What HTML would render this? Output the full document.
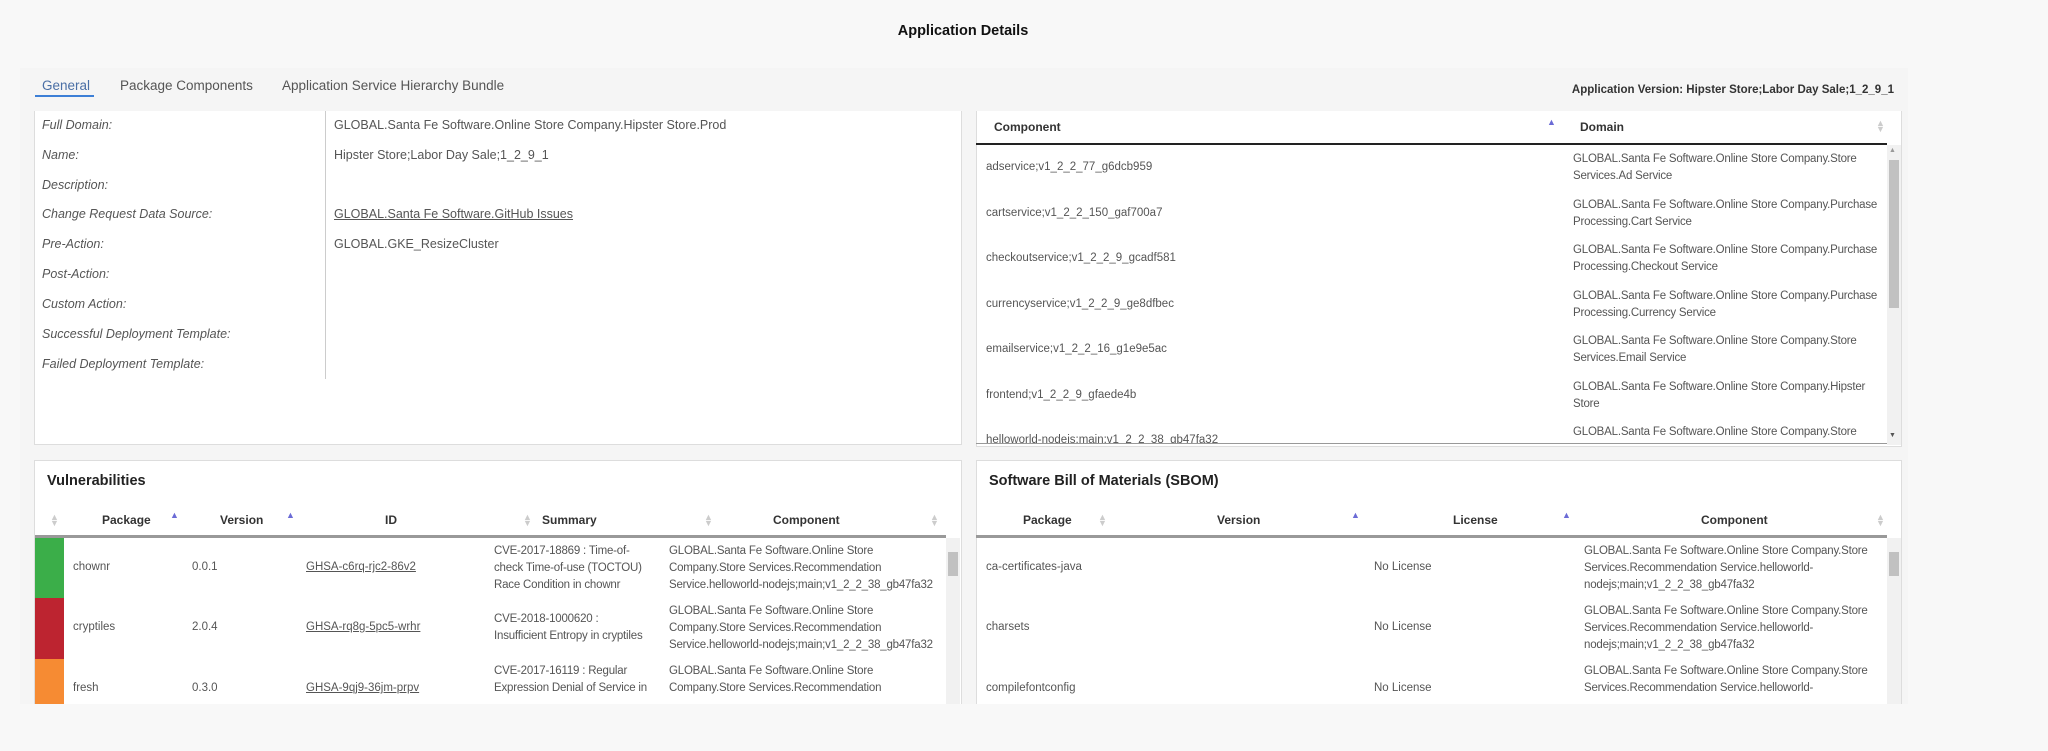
<!DOCTYPE html>
<html><head><meta charset="utf-8"><style>
*{box-sizing:border-box;margin:0;padding:0}
body{width:2048px;height:751px;overflow:hidden;background:#f8f8f8;font-family:"Liberation Sans",sans-serif;color:#555;position:relative;font-size:11.5px}
.a{position:absolute;white-space:nowrap}
.title{left:0;width:1926px;text-align:center;top:23px;font-weight:bold;font-size:14.5px;color:#111}
.cont{position:absolute;left:20px;top:68px;width:1888px;height:636px;background:#f5f5f5}
.tab{top:78px;font-size:13.5px;color:#555}
.panel{position:absolute;background:#fff;border:1px solid #ddd}
.lbl{left:42px;font-style:italic;font-size:12.5px;color:#555}
.val{left:334px;font-size:12.5px;color:#555}
.hd{font-weight:bold;color:#333;font-size:12px}
.sb{position:absolute;background:#f1f1f1}
.th{position:absolute;background:#c1c1c1}
.up{color:#6b6bd6;font-size:9px}
.both{color:#ccc;font-size:9px;line-height:6px}
u{text-decoration:underline}
.ml{white-space:normal;line-height:17px;letter-spacing:-0.2px}
</style></head><body>
<div class="a title">Application Details</div>
<div class="cont"></div>
<div class="a tab" style="left:42px;color:#4a6fa5">General</div>
<div class="a" style="left:35px;top:95px;width:59px;height:2px;background:#3d7fd6"></div>
<div class="a tab" style="left:120px">Package Components</div>
<div class="a tab" style="left:282px">Application Service Hierarchy Bundle</div>
<div class="a" style="right:154px;top:84px;font-weight:bold;font-size:11.5px;color:#333">Application Version: Hipster Store;Labor Day Sale;1_2_9_1</div>

<!-- top-left panel -->
<div class="panel" style="left:34px;top:111px;width:928px;height:334px;border-top:none"></div>
<div class="a" style="left:325px;top:111px;width:1px;height:268px;background:#ccc"></div>
<div class="a lbl" style="top:118px">Full Domain:</div>
<div class="a lbl" style="top:148px">Name:</div>
<div class="a lbl" style="top:178px">Description:</div>
<div class="a lbl" style="top:207px">Change Request Data Source:</div>
<div class="a lbl" style="top:237px">Pre-Action:</div>
<div class="a lbl" style="top:267px">Post-Action:</div>
<div class="a lbl" style="top:297px">Custom Action:</div>
<div class="a lbl" style="top:327px">Successful Deployment Template:</div>
<div class="a lbl" style="top:357px">Failed Deployment Template:</div>
<div class="a val" style="top:118px">GLOBAL.Santa Fe Software.Online Store Company.Hipster Store.Prod</div>
<div class="a val" style="top:148px">Hipster Store;Labor Day Sale;1_2_9_1</div>
<div class="a val" style="top:207px"><u>GLOBAL.Santa Fe Software.GitHub Issues</u></div>
<div class="a val" style="top:237px">GLOBAL.GKE_ResizeCluster</div>

<!-- top-right panel -->
<div class="panel" style="left:976px;top:111px;width:926px;height:336px;border-top:none"></div>
<div class="a hd" style="left:994px;top:120px">Component</div>
<div class="a up" style="left:1547px;top:117px">▲</div>
<div class="a hd" style="left:1580px;top:120px">Domain</div>
<div class="a both" style="left:1876px;top:120px">▲<br>▼</div>
<div class="a" style="left:976px;top:143px;width:911px;height:2px;background:#222"></div>
<div class="sb" style="left:1887px;top:145px;width:14px;height:300px"></div>
<div class="th" style="left:1889px;top:160px;width:10px;height:148px"></div>
<div class="a" style="left:1889px;top:147px;font-size:7px;color:#999">▲</div>
<div class="a" style="left:1889px;top:432px;font-size:7px;color:#555">▼</div>
<div class="a" style="left:986px;top:161px">adservice;v1_2_2_77_g6dcb959</div>
<div class="a" style="left:986px;top:207px">cartservice;v1_2_2_150_gaf700a7</div>
<div class="a" style="left:986px;top:252px">checkoutservice;v1_2_2_9_gcadf581</div>
<div class="a" style="left:986px;top:298px">currencyservice;v1_2_2_9_ge8dfbec</div>
<div class="a" style="left:986px;top:343px">emailservice;v1_2_2_16_g1e9e5ac</div>
<div class="a" style="left:986px;top:389px">frontend;v1_2_2_9_gfaede4b</div>
<div class="a" style="left:986px;top:434px;height:10px;overflow:hidden">helloworld-nodejs;main;v1_2_2_38_gb47fa32</div>
<div class="a ml" style="left:1573px;top:151px">GLOBAL.Santa Fe Software.Online Store Company.Store<br>Services.Ad Service</div>
<div class="a ml" style="left:1573px;top:197px">GLOBAL.Santa Fe Software.Online Store Company.Purchase<br>Processing.Cart Service</div>
<div class="a ml" style="left:1573px;top:242px">GLOBAL.Santa Fe Software.Online Store Company.Purchase<br>Processing.Checkout Service</div>
<div class="a ml" style="left:1573px;top:288px">GLOBAL.Santa Fe Software.Online Store Company.Purchase<br>Processing.Currency Service</div>
<div class="a ml" style="left:1573px;top:333px">GLOBAL.Santa Fe Software.Online Store Company.Store<br>Services.Email Service</div>
<div class="a ml" style="left:1573px;top:379px">GLOBAL.Santa Fe Software.Online Store Company.Hipster<br>Store</div>
<div class="a ml" style="left:1573px;top:424px">GLOBAL.Santa Fe Software.Online Store Company.Store</div>
<div class="a" style="left:976px;top:443px;width:911px;height:1px;background:#999"></div>

<!-- vulnerabilities -->
<div class="panel" style="left:34px;top:460px;width:928px;height:260px"></div>
<div class="a" style="left:47px;top:473px;font-weight:bold;font-size:14.5px;color:#222">Vulnerabilities</div>
<div class="a both" style="left:50px;top:514px">▲<br>▼</div>
<div class="a hd" style="left:102px;top:513px">Package</div>
<div class="a up" style="left:170px;top:510px">▲</div>
<div class="a hd" style="left:220px;top:513px">Version</div>
<div class="a up" style="left:286px;top:510px">▲</div>
<div class="a hd" style="left:385px;top:513px">ID</div>
<div class="a both" style="left:523px;top:514px">▲<br>▼</div>
<div class="a hd" style="left:542px;top:513px">Summary</div>
<div class="a both" style="left:704px;top:514px">▲<br>▼</div>
<div class="a hd" style="left:773px;top:513px">Component</div>
<div class="a both" style="left:930px;top:514px">▲<br>▼</div>
<div class="a" style="left:35px;top:535px;width:911px;height:3px;background:#999"></div>
<div class="sb" style="left:946px;top:538px;width:14px;height:166px"></div>
<div class="th" style="left:948px;top:552px;width:10px;height:24px"></div>
<div class="a" style="left:35px;top:538px;width:29px;height:60px;background:#3bae49"></div>
<div class="a" style="left:35px;top:598px;width:29px;height:61px;background:#bd2430"></div>
<div class="a" style="left:35px;top:659px;width:29px;height:45px;background:#f68b33"></div>
<div class="a" style="left:73px;top:561px">chownr</div>
<div class="a" style="left:192px;top:561px">0.0.1</div>
<div class="a" style="left:306px;top:561px"><u>GHSA-c6rq-rjc2-86v2</u></div>
<div class="a ml" style="left:494px;top:543px">CVE-2017-18869 : Time-of-<br>check Time-of-use (TOCTOU)<br>Race Condition in chownr</div>
<div class="a ml" style="left:669px;top:543px">GLOBAL.Santa Fe Software.Online Store<br>Company.Store Services.Recommendation<br>Service.helloworld-nodejs;main;v1_2_2_38_gb47fa32</div>
<div class="a" style="left:73px;top:621px">cryptiles</div>
<div class="a" style="left:192px;top:621px">2.0.4</div>
<div class="a" style="left:306px;top:621px"><u>GHSA-rq8g-5pc5-wrhr</u></div>
<div class="a ml" style="left:494px;top:611px">CVE-2018-1000620 :<br>Insufficient Entropy in cryptiles</div>
<div class="a ml" style="left:669px;top:603px">GLOBAL.Santa Fe Software.Online Store<br>Company.Store Services.Recommendation<br>Service.helloworld-nodejs;main;v1_2_2_38_gb47fa32</div>
<div class="a" style="left:73px;top:682px">fresh</div>
<div class="a" style="left:192px;top:682px">0.3.0</div>
<div class="a" style="left:306px;top:682px"><u>GHSA-9qj9-36jm-prpv</u></div>
<div class="a ml" style="left:494px;top:663px">CVE-2017-16119 : Regular<br>Expression Denial of Service in</div>
<div class="a ml" style="left:669px;top:663px">GLOBAL.Santa Fe Software.Online Store<br>Company.Store Services.Recommendation</div>

<!-- SBOM -->
<div class="panel" style="left:976px;top:460px;width:926px;height:260px"></div>
<div class="a" style="left:989px;top:473px;font-weight:bold;font-size:14.5px;color:#222">Software Bill of Materials (SBOM)</div>
<div class="a hd" style="left:1023px;top:513px">Package</div>
<div class="a both" style="left:1098px;top:514px">▲<br>▼</div>
<div class="a hd" style="left:1217px;top:513px">Version</div>
<div class="a up" style="left:1351px;top:510px">▲</div>
<div class="a hd" style="left:1453px;top:513px">License</div>
<div class="a up" style="left:1562px;top:510px">▲</div>
<div class="a hd" style="left:1701px;top:513px">Component</div>
<div class="a both" style="left:1876px;top:514px">▲<br>▼</div>
<div class="a" style="left:976px;top:535px;width:911px;height:3px;background:#999"></div>
<div class="sb" style="left:1887px;top:538px;width:14px;height:166px"></div>
<div class="th" style="left:1889px;top:552px;width:10px;height:24px"></div>
<div class="a" style="left:986px;top:561px">ca-certificates-java</div>
<div class="a" style="left:1374px;top:561px">No License</div>
<div class="a ml" style="left:1584px;top:543px">GLOBAL.Santa Fe Software.Online Store Company.Store<br>Services.Recommendation Service.helloworld-<br>nodejs;main;v1_2_2_38_gb47fa32</div>
<div class="a" style="left:986px;top:621px">charsets</div>
<div class="a" style="left:1374px;top:621px">No License</div>
<div class="a ml" style="left:1584px;top:603px">GLOBAL.Santa Fe Software.Online Store Company.Store<br>Services.Recommendation Service.helloworld-<br>nodejs;main;v1_2_2_38_gb47fa32</div>
<div class="a" style="left:986px;top:682px">compilefontconfig</div>
<div class="a" style="left:1374px;top:682px">No License</div>
<div class="a ml" style="left:1584px;top:663px">GLOBAL.Santa Fe Software.Online Store Company.Store<br>Services.Recommendation Service.helloworld-</div>

<div class="a" style="left:0;top:704px;width:2048px;height:47px;background:#f8f8f8"></div>
</body></html>
